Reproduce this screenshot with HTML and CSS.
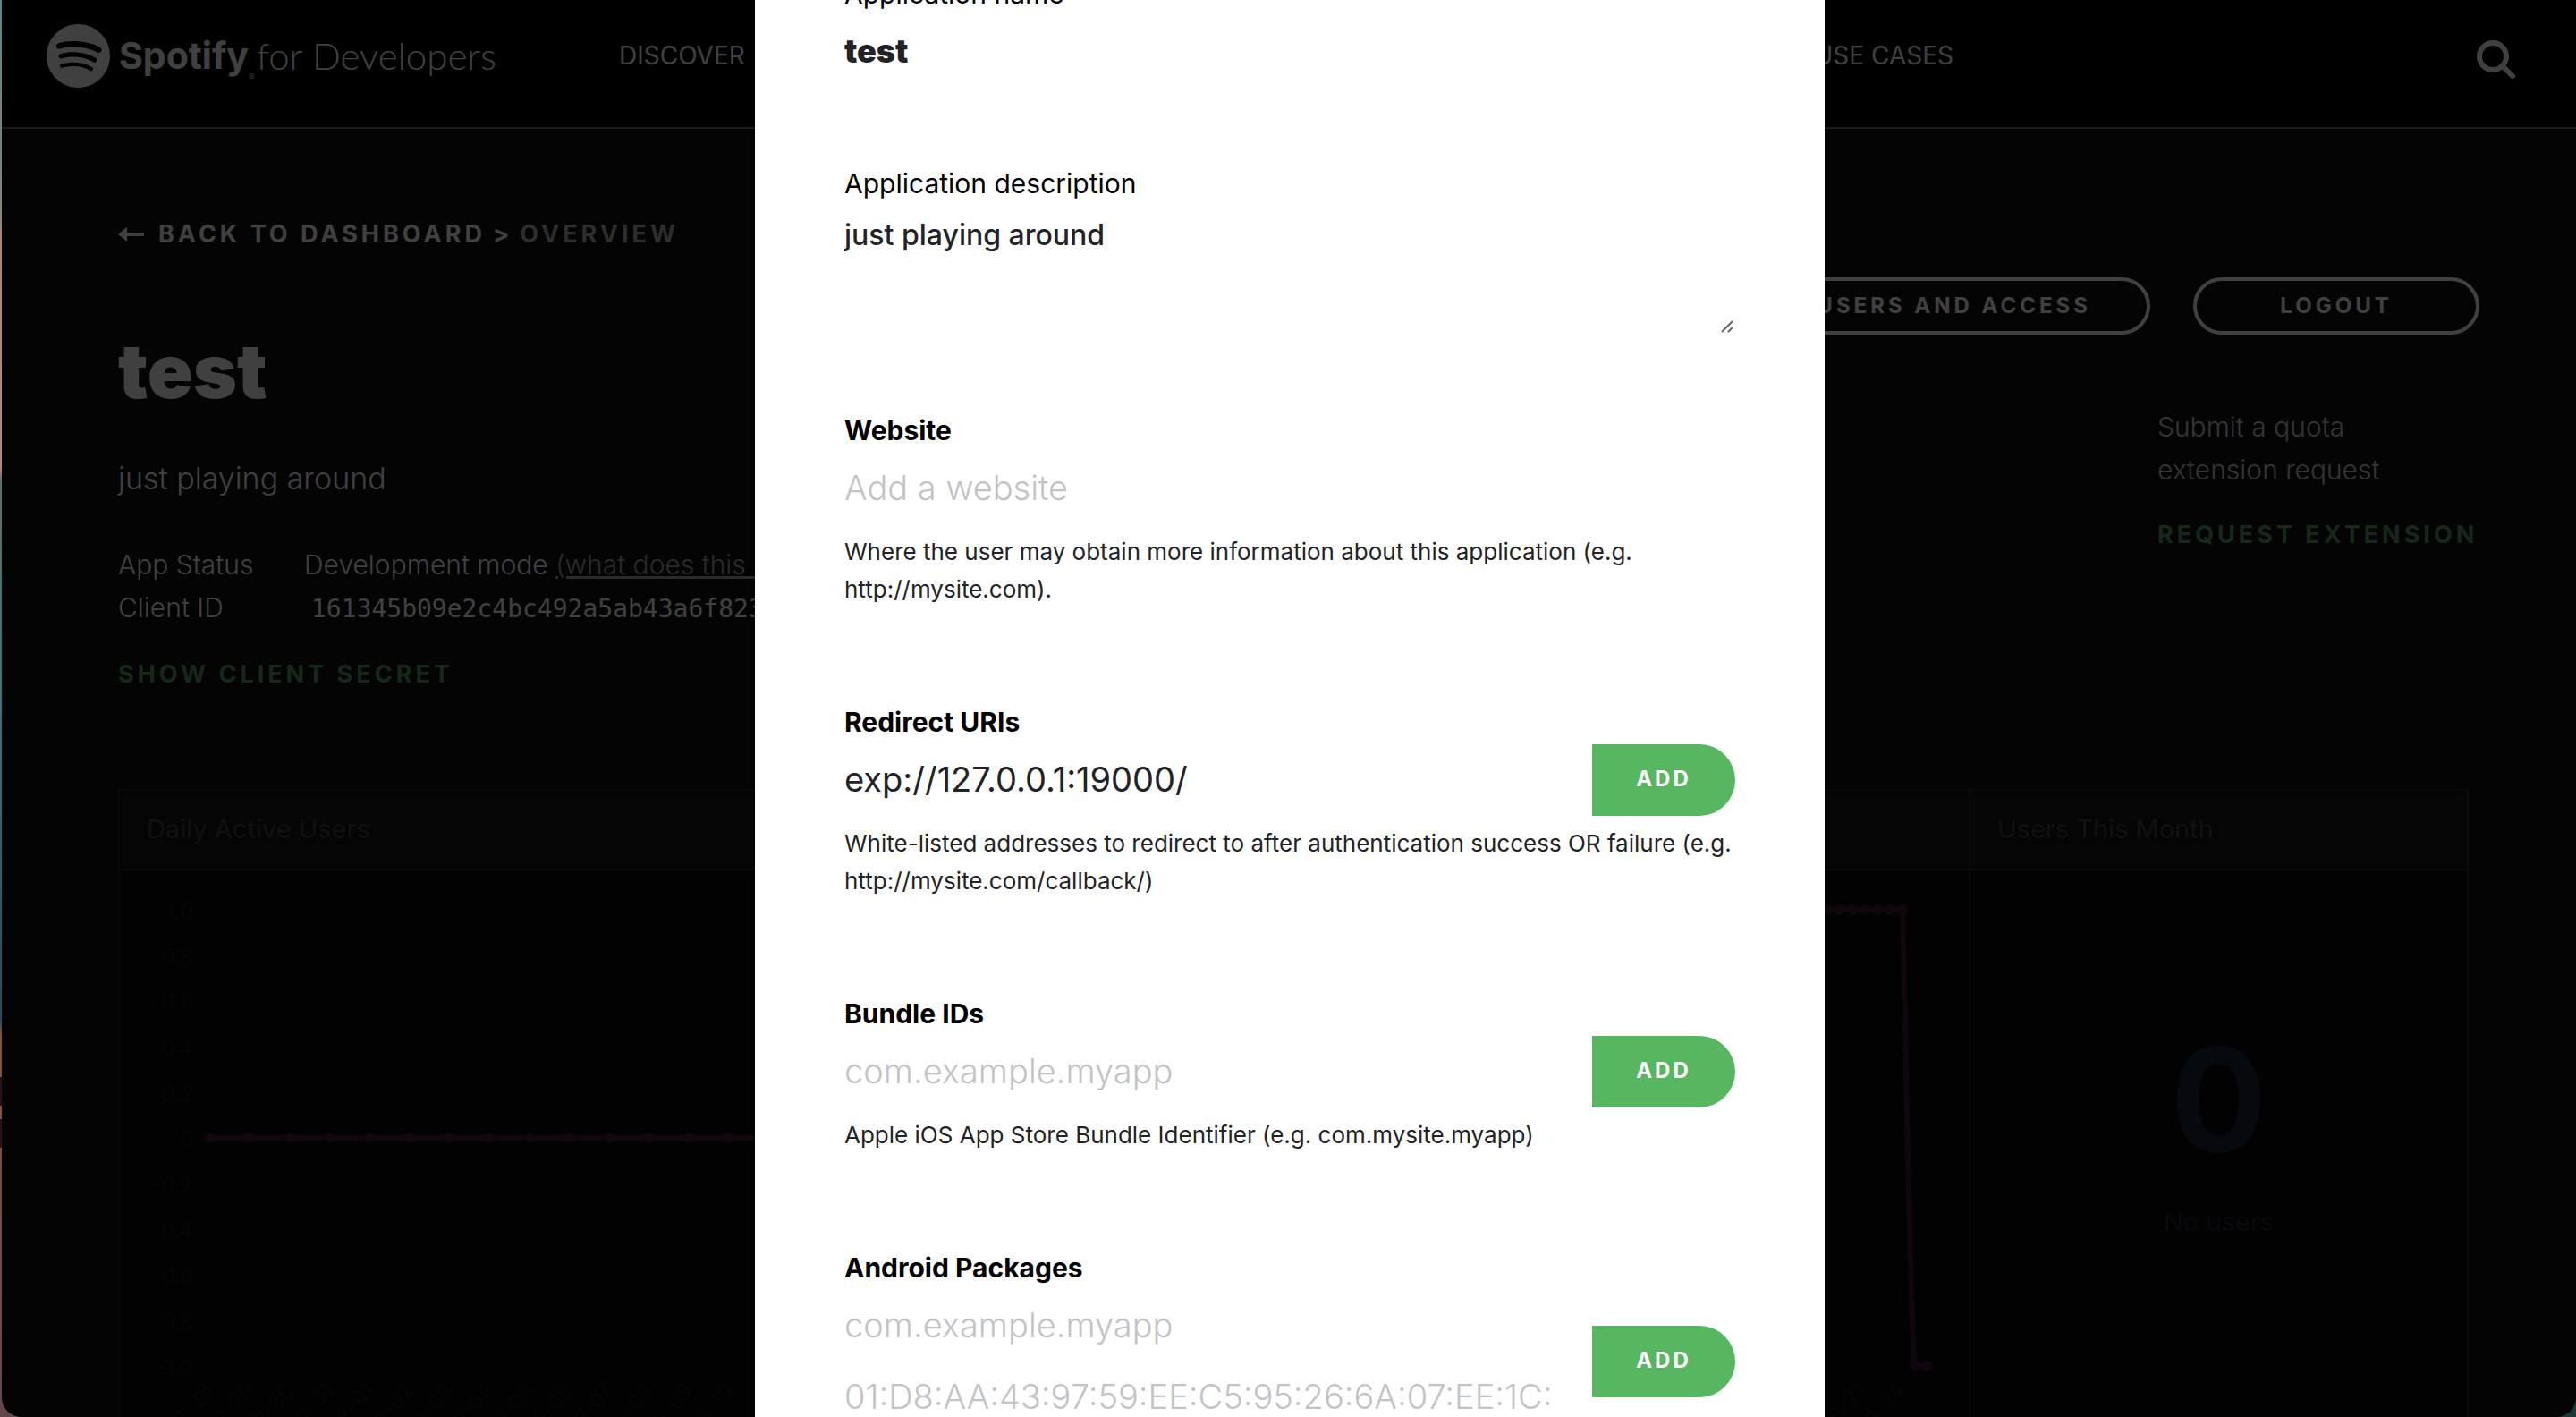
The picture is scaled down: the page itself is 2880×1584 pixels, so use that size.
FILE: index.html
```html
<!DOCTYPE html>
<html lang="en">
<head>
<meta charset="utf-8">
<title>test | Spotify for Developers</title>
<link rel="stylesheet" href="styles.css">
</head>
<body>
<div class="window">
  <header class="site-header">
    <a class="logo" href="#">
      <svg class="logo-mark" viewBox="0 0 24 24" aria-hidden="true"><path fill="currentColor" d="M12 0C5.4 0 0 5.4 0 12s5.4 12 12 12 12-5.400 12-12S18.660 0 12 0zm5.521 17.340c-.24.359-.66.48-1.021.24-2.820-1.740-6.360-2.101-10.561-1.141-.418.122-.779-.179-.899-.539-.12-.421.18-.78.54-.9 4.560-1.021 8.520-.6 11.640 1.320.42.18.479.659.301 1.020zm1.440-3.300c-.301.42-.841.6-1.262.3-3.239-1.980-8.159-2.580-11.939-1.380-.479.12-1.020-.12-1.140-.6-.12-.48.12-1.021.6-1.141C9.600 9.900 15 10.561 18.720 12.840c.361.181.54.78.241 1.200zm.12-3.360C15.240 8.400 8.820 8.160 5.160 9.301c-.6.179-1.200-.181-1.380-.721-.18-.601.18-1.200.72-1.381 4.260-1.260 11.280-1.020 15.721 1.621.539.3.719 1.020.419 1.560-.299.421-1.020.599-1.559.3z"/></svg>
      <span class="logo-name">Spotify</span><span class="logo-reg">®</span><span class="logo-sub">for Developers</span>
    </a>
    <nav class="site-nav">
      <a href="#">DISCOVER</a>
      <a href="#">USE CASES</a>
    </nav>
    <button class="search" type="button" aria-label="Search">
      <svg viewBox="0 0 44 44" aria-hidden="true"><circle cx="18" cy="18" r="15" fill="none" stroke="currentColor" stroke-width="6"/><path d="M31 31l9 9" stroke="currentColor" stroke-width="6" stroke-linecap="round"/></svg>
    </button>
  </header>

  <main class="page">
    <section class="summary">
      <div class="app">
        <p class="crumbs">
          <svg class="back-arrow" viewBox="0 0 29 16" aria-hidden="true"><path fill="currentColor" d="M0 8L10 0V6H29V10H10V16Z"/></svg>
          <a href="#">BACK TO DASHBOARD</a><span>&gt;</span><span class="crumb-current">OVERVIEW</span>
        </p>
        <h1>test</h1>
        <p class="app-desc">just playing around</p>
        <dl class="facts">
          <dt>App Status</dt><dd>Development mode <a href="#">(what does this mean?)</a></dd>
          <dt>Client ID</dt><dd><code>161345b09e2c4bc492a5ab43a6f823</code></dd>
        </dl>
        <button class="link-button" type="button">SHOW CLIENT SECRET</button>
      </div>
      <div class="account">
        <div class="pills">
          <button class="pill" type="button">USERS AND ACCESS</button>
          <button class="pill" type="button">LOGOUT</button>
        </div>
        <div class="quota">
          <p>Submit a quota<br>extension request</p>
          <button class="link-button" type="button">REQUEST EXTENSION</button>
        </div>
      </div>
    </section>

    <section class="cards">
      <article class="card">
        <h2>Daily Active Users</h2>
        <svg class="chart" width="720" height="660" viewBox="0 0 720 660">
          <g class="axis" text-anchor="end">
            <text x="82" y="54">1.0</text><text x="82" y="105">0.8</text><text x="82" y="156">0.6</text><text x="82" y="207">0.4</text><text x="82" y="258">0.2</text><text x="82" y="309">0</text><text x="82" y="360">-0.2</text><text x="82" y="411">-0.4</text><text x="82" y="462">-0.6</text><text x="82" y="513">-0.8</text><text x="82" y="564">-1.0</text>
            <text transform="translate(106 582) rotate(-50)">7-28</text><text transform="translate(151 582) rotate(-50)">7-29</text><text transform="translate(196 582) rotate(-50)">7-30</text><text transform="translate(240 582) rotate(-50)">7-31</text><text transform="translate(285 582) rotate(-50)">8-01</text><text transform="translate(330 582) rotate(-50)">8-02</text><text transform="translate(374 582) rotate(-50)">8-03</text><text transform="translate(419 582) rotate(-50)">8-04</text><text transform="translate(464 582) rotate(-50)">8-05</text><text transform="translate(508 582) rotate(-50)">8-06</text><text transform="translate(553 582) rotate(-50)">8-07</text><text transform="translate(598 582) rotate(-50)">8-08</text><text transform="translate(642 582) rotate(-50)">8-09</text><text transform="translate(687 582) rotate(-50)">8-10</text>
          </g>
          <path class="line" d="M100 299H720"/>
          <path class="dots" d="M100 299h0M145 299h0M190 299h0M234 299h0M279 299h0M324 299h0M368 299h0M413 299h0M458 299h0M502 299h0M547 299h0M592 299h0M636 299h0M681 299h0"/>
        </svg>
      </article>
      <article class="card card-right">
        <h2></h2>
        <svg class="chart" width="200" height="660" viewBox="0 0 200 660">
          <g class="axis" text-anchor="end">
            <text transform="translate(86 582) rotate(-50)">8-21</text><text transform="translate(130 582) rotate(-50)">8-24</text>
          </g>
          <path class="line" d="M0 44H126C130 200 133 420 139 554H154"/>
          <path class="dots" d="M42 44h0M56 44h0M70 44h0M84 44h0M98 44h0M112 44h0M126 44h0M140 554h0M154 554h0"/>
        </svg>
      </article>
      <article class="card">
        <h2>Users This Month</h2>
        <div class="count"><strong>0</strong><span>No users</span></div>
      </article>
    </section>
  </main>

  <div class="overlay">
    <div class="modal" role="dialog" aria-label="Edit settings">
      <form class="form">
        <div class="field">
          <label class="label-light" for="name">Application name</label>
          <input class="name-input" id="name" type="text" value="test">
        </div>
        <div class="field">
          <label class="label-light" for="desc">Application description</label>
          <div class="area">
            <textarea id="desc">just playing around</textarea>
            <svg class="grip" viewBox="0 0 14 14" aria-hidden="true"><path d="M1 13L13 1M8 13L13 8" stroke="currentColor" stroke-width="2"/></svg>
          </div>
        </div>
        <div class="field">
          <label for="site">Website</label>
          <input id="site" type="text" placeholder="Add a website">
          <p class="help">Where the user may obtain more information about this application (e.g. http://mysite.com).</p>
        </div>
        <div class="field">
          <label for="uri">Redirect URIs</label>
          <div class="row"><input id="uri" type="text" value="exp://127.0.0.1:19000/"><button class="add" type="button">ADD</button></div>
          <p class="help">White-listed addresses to redirect to after authentication success OR failure (e.g. http://mysite.com/callback/)</p>
        </div>
        <div class="field">
          <label for="bundle">Bundle IDs</label>
          <div class="row"><input id="bundle" type="text" placeholder="com.example.myapp"><button class="add" type="button">ADD</button></div>
          <p class="help">Apple iOS App Store Bundle Identifier (e.g. com.mysite.myapp)</p>
        </div>
        <div class="field">
          <label for="package">Android Packages</label>
          <div class="row">
            <div class="stack">
              <input id="package" type="text" placeholder="com.example.myapp">
              <input type="text" aria-label="SHA1 fingerprint" placeholder="01:D8:AA:43:97:59:EE:C5:95:26:6A:07:EE:1C:">
            </div>
            <button class="add" type="button">ADD</button>
          </div>
        </div>
      </form>
    </div>
  </div>
</div>
</body>
</html>
```
FILE: styles.css
```css
* { box-sizing: border-box; margin: 0; padding: 0; }

html, body { height: 100%; }

body {
  padding-left: 2px;
  overflow: hidden;
  font: 300 30px/42px Inter, "Liberation Sans", sans-serif;
  color: #fff;
  background:
    linear-gradient(#5c8585 0, #7d857c 14%, #a98672 17%, #b08a78 33%, #5f6e68 34%, #3d7278 50%, #1f4d58 72%, #84523f 73%, #84523f 76%, #2b1218 76%, #2b1218 78%, #84523f 78%, #84523f 79%, #2b1218 79%, #2b1218 81%, #7a5040 81%, #62484c 100%) left / 40px 100% no-repeat,
    #1a3836;
}

button, input, textarea { font: inherit; color: inherit; border: 0; background: none; outline: 0; }
a { color: inherit; text-decoration: none; }

.window {
  position: relative;
  height: 100%;
  overflow: hidden;
  background: #101010;
  border-radius: 0 0 22px 22px;
}

/* Header */
.site-header {
  display: flex;
  align-items: center;
  height: 144px;
  padding: 0 67px 18px 50px;
  background: #000;
  border-bottom: 2px solid #707070;
}
.logo { display: flex; align-items: center; width: 640px; }
.logo-mark { width: 71px; height: 71px; margin-right: 10px; }
.logo-name { font-size: 41px; font-weight: 700; }
.logo-reg { align-self: flex-end; font-size: 10px; line-height: 24px; }
.logo-sub { margin-left: 2px; font: 300 42px/42px Lato, sans-serif; }
.site-nav {
  display: flex;
  justify-content: space-between;
  width: 1492px;
  font-size: 28px;
  font-weight: 400;
}
.search { margin-left: auto; padding-top: 10px; line-height: 0; }
.search svg { width: 44px; height: 44px; }

/* App summary */
.page { padding: 97px 108px 0 130px; }
.summary { display: flex; justify-content: space-between; }
.crumbs {
  display: flex;
  align-items: center;
  gap: 8px;
  font-size: 27px;
  font-weight: 700;
  letter-spacing: 4px;
}
.back-arrow { width: 29px; height: 16px; margin-right: 8px; }
.crumb-current { color: #b4b4b4; }
h1 { margin-top: 82px; font-size: 84px; font-weight: 900; line-height: 100px; }
.app-desc { margin-top: 46px; font-size: 34px; line-height: 48px; }
.facts {
  display: grid;
  grid-template-columns: 208px auto;
  margin: 48px 0 28px;
  line-height: 48px;
}
.facts a { color: #a8a8a8; text-decoration: underline; }
.facts code { margin-left: 8px; font: 28px/48px "DejaVu Sans Mono", monospace; }
.link-button {
  display: block;
  font-size: 27px;
  font-weight: 700;
  line-height: 42px;
  letter-spacing: 4px;
  color: #58a068;
}

.account { padding-top: 69px; }
.pills { display: flex; justify-content: flex-end; gap: 48px; }
.pill {
  min-width: 320px;
  height: 64px;
  padding: 0 62px;
  border: 4px solid #fff;
  border-radius: 32px;
  font-size: 24px;
  font-weight: 700;
  letter-spacing: 4px;
}
.quota { width: 360px; margin: 79px 0 0 auto; line-height: 48px; color: #d0d0d0; }
.quota .link-button { margin-top: 28px; white-space: nowrap; }

/* Statistics cards */
.cards {
  display: grid;
  grid-template-columns: 1fr 1fr 557px;
  margin: 107px 12px 0 0;
  border: 2px solid #282828;
  border-bottom: 0;
}
.card { background: #080808; overflow: hidden; }
.card + .card { border-left: 2px solid #282828; }
.card h2 {
  height: 89px;
  padding: 22px 30px;
  font-size: 29px;
  font-weight: 400;
  color: #444;
  background: #141414;
  border-bottom: 2px solid #282828;
}
.chart { display: block; }
.card-right .chart { margin-left: auto; }
.axis { fill: #1c1c1c; font-size: 24px; }
.line, .dots { fill: none; stroke: #3c1838; stroke-width: 6; }
.dots { stroke-width: 12; stroke-linecap: round; }
.count { display: grid; justify-items: center; padding-top: 166px; color: #1e2430; }
.count strong { font-size: 160px; font-weight: 700; line-height: 180px; color: #182438; }
.count span { margin-top: 26px; font-size: 29px; font-weight: 400; }

/* Settings dialog */
.overlay {
  position: absolute;
  inset: 0;
  display: flex;
  justify-content: center;
  padding-left: 2px;
  background: rgba(0, 0, 0, 0.75);
}
.modal { width: 1196px; padding: 0 100px; background: #fff; color: #222326; }
.form { display: grid; gap: 86px; margin-top: -28px; }
.field { display: grid; }
label { font-weight: 700; color: #000; }
.label-light { font-weight: 400; }
.field input {
  width: 100%;
  min-width: 0;
  height: 80px;
  margin-top: 4px;
  padding-bottom: 2px;
  font-size: 38px;
  font-weight: 400;
}
.field .name-input { font-size: 36px; font-weight: 900; }
.field ::placeholder { font-weight: 300; color: #c1c3c6; opacity: 1; }
.area { position: relative; margin-top: 16px; line-height: 0; }
.area textarea {
  width: 100%;
  height: 132px;
  font-size: 32px;
  font-weight: 500;
  line-height: 42px;
  resize: none;
}
.grip { position: absolute; right: 2px; bottom: 2px; width: 14px; height: 14px; color: #666; }
.help { margin: 10px 0 20px; font-size: 26px; font-weight: 400; }
.row { display: flex; align-items: center; gap: 24px; margin-top: 4px; }
.field .row input { margin-top: 0; }
.stack { display: grid; flex: 1; }
.add {
  flex: none;
  width: 160px;
  height: 80px;
  padding-bottom: 2px;
  border-radius: 0 40px 40px 0;
  background: #57b660;
  color: #fff;
  font-size: 24px;
  font-weight: 700;
  letter-spacing: 3px;
}
```
